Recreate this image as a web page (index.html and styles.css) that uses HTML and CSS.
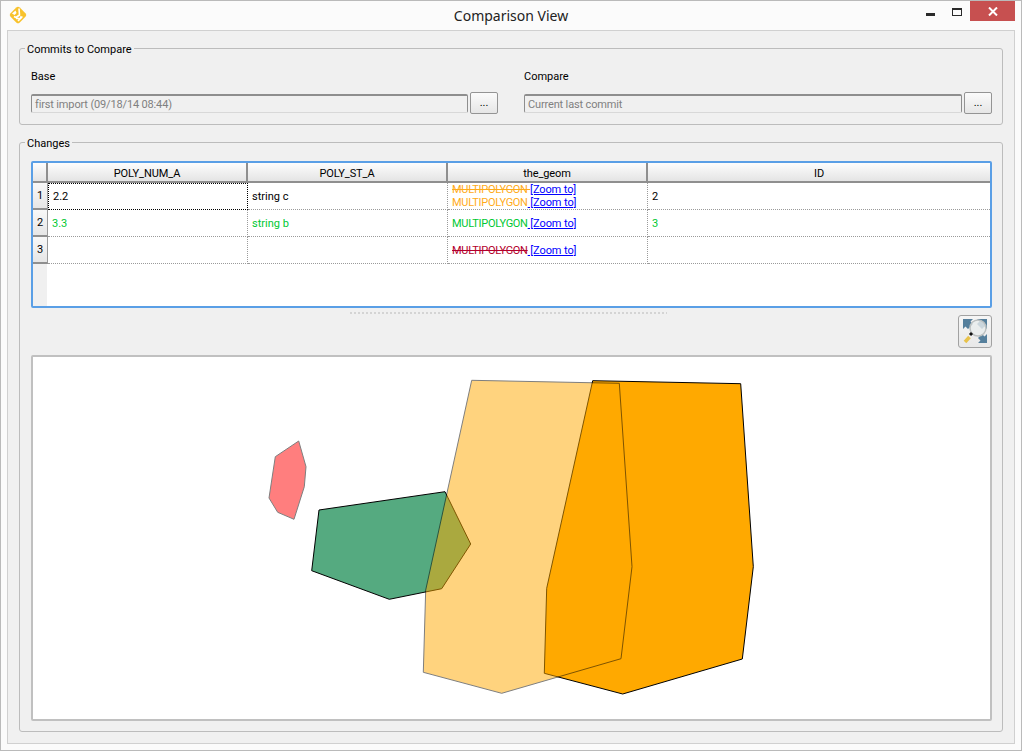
FILE: index.html
```html
<!DOCTYPE html>
<html>

<head>
    <meta charset="UTF-8">
    <title>Comparison View</title>
    <link rel="stylesheet" href="styles.css">
</head>

<body>
    <div class="window">
        <div class="titlebar">
            <svg class="app-icon" width="20" height="20" viewBox="0 0 20 20">
                <rect x="3.5" y="3.5" width="13" height="13" rx="2.5" transform="rotate(45 10 10)" fill="#f8c22c" />
                <path d="M4 8.5 L7.5 5.5 L8.5 8 L6.5 10 Z" fill="#fff" />
                <path d="M11 3.5 L11.5 10 L8 12.5 L6 11.5 M12 12 L14.5 12 M8 13.5 L12.5 13.5 L10 16" fill="none" stroke="#fff" stroke-width="1.6" />
            </svg>
            <div class="title">Comparison View</div>
            <div class="controls">
                <span class="ctl-min"></span>
                <span class="ctl-max"></span>
                <span class="ctl-close">
                    <svg width="10" height="9" viewBox="0 0 10 9">
                        <path d="M1 0.5 L9 8.5 M9 0.5 L1 8.5" stroke="#fff" stroke-width="2" />
                    </svg>
                </span>
            </div>
        </div>

        <div class="panel">
            <fieldset class="group">
                <legend>Commits to Compare</legend>
                <div class="commits">
                    <div>
                        <div class="field-label">Base</div>
                        <div class="field-row">
                            <div class="line-edit">first import (09/18/14 08:44)</div>
                            <button class="dots-btn">...</button>
                        </div>
                    </div>
                    <div>
                        <div class="field-label">Compare</div>
                        <div class="field-row">
                            <div class="line-edit">Current last commit</div>
                            <button class="dots-btn">...</button>
                        </div>
                    </div>
                </div>
            </fieldset>

            <fieldset class="group group-changes">
                <legend>Changes</legend>
                <div class="table-view">
                    <table class="changes">
                        <thead>
                            <tr>
                                <th class="corner"></th>
                                <th class="col">POLY_NUM_A</th>
                                <th class="col">POLY_ST_A</th>
                                <th class="col">the_geom</th>
                                <th class="col-last">ID</th>
                            </tr>
                        </thead>
                        <tbody>
                            <tr>
                                <th class="row-head">1</th>
                                <td class="current">2.2</td>
                                <td>string c</td>
                                <td class="geom">
                                    <s class="modified">MULTIPOLYGON </s><a href="#">[Zoom to]</a><br>
                                    <span class="modified">MULTIPOLYGON</span><a href="#"> [Zoom to]</a>
                                </td>
                                <td>2</td>
                            </tr>
                            <tr class="added">
                                <th class="row-head">2</th>
                                <td>3.3</td>
                                <td>string b</td>
                                <td class="geom">MULTIPOLYGON<a href="#"> [Zoom to]</a></td>
                                <td>3</td>
                            </tr>
                            <tr>
                                <th class="row-head">3</th>
                                <td></td>
                                <td></td>
                                <td class="geom"><s class="removed">MULTIPOLYGON</s><a href="#"> [Zoom to]</a></td>
                                <td></td>
                            </tr>
                        </tbody>
                    </table>
                    <div class="table-rest">
                        <div class="rest-gutter"></div>
                    </div>
                </div>

                <div class="splitter"></div>

                <div class="map-tools">
                    <button class="zoom-btn">
                        <svg width="30" height="29" viewBox="0 0 30 29">
                            <g fill="#557f9c">
                                <path d="M3 2 L13 2 L10.5 4.5 L13 7 L8 12 L5.5 9.5 L3 12 Z" />
                                <path d="M27 2 L17 2 L19.5 4.5 L17 7 L22 12 L24.5 9.5 L27 12 Z" />
                                <path d="M27 26 L18 26 L20.5 23.5 L18 21 L22 17 L24.5 19.5 L27 17 Z" />
                            </g>
                            <circle cx="18" cy="11" r="8" fill="#e8ecec" fill-opacity="0.8" stroke="#bcc0c0" stroke-width="1.5" />
                            <path d="M10 18 L12 16" stroke="#111" stroke-width="3" />
                            <path d="M5 25 L9.5 20" stroke="#e8c24a" stroke-width="3.5" />
                        </svg>
                    </button>
                </div>

                <div class="map">
                    <svg width="957" height="362" viewBox="33 357 957 362">
                        <polygon class="shape-added" points="319,510 445,491.7 470.7,544 441.7,588.7 389.3,599.3 311.7,570.7" />
                        <polygon class="shape-removed" points="298.7,441 306,466.7 304.3,486.7 294,519.3 277.7,512.3 269,498 275.3,456.7" />
                        <polygon class="shape-after" points="592.7,380.7 740.7,383.7 753.3,566.7 742.3,659 622.7,694 544.3,673.3 546.7,588.3" />
                        <polygon class="shape-before" points="471.7,380.3 619.3,383.3 632,566.7 621,658.7 501.7,693.3 423.3,672.3 425.7,590" />
                    </svg>
                </div>
            </fieldset>
        </div>
    </div>
</body>

</html>
```

FILE: styles.css
```css
* {
    box-sizing: border-box;
}

body {
    margin: 0;
    font-family: Roboto, "Liberation Sans", sans-serif;
    font-size: 11px;
    color: #000;
}

.window {
    width: 1022px;
    height: 751px;
    display: flex;
    flex-direction: column;
    padding: 0 6px 6px;
    background-color: #fbfbfb;
    border: 1px solid #bababa;
}

/* title bar */

.titlebar {
    flex: none;
    height: 29px;
    position: relative;
    display: flex;
    align-items: center;
    justify-content: center;
}

.app-icon {
    position: absolute;
    left: 1px;
    top: 4px;
}

.title {
    font-family: "Noto Sans", sans-serif;
    font-size: 14px;
    color: #222;
}

.controls {
    position: absolute;
    right: 0;
    top: 0;
    display: flex;
}

.ctl-min {
    width: 9px;
    height: 3px;
    margin: 12px 17px 0 0;
    background-color: #2a2a2a;
}

.ctl-max {
    width: 10px;
    height: 8px;
    margin: 7px 8px 0 0;
    border: 1px solid #2a2a2a;
    border-top-width: 2px;
}

.ctl-close {
    width: 45px;
    height: 20px;
    display: flex;
    align-items: center;
    justify-content: center;
    background-color: #c75050;
}

/* panel and groups */

.panel {
    flex: 1;
    display: flex;
    flex-direction: column;
    gap: 9px;
    padding: 9px 11px 11px;
    background-color: #f0f0f0;
    border: 1px solid #d0d0d0;
}

.group {
    margin: 0;
    padding: 0 10px 10px 11px;
    min-width: 0;
    border: 1px solid #bcbcbc;
    border-radius: 3px;
}

.group legend {
    margin-left: -6px;
    padding: 3px 2px 0;
    line-height: 13px;
}

.group-changes {
    flex: 1;
}

.commits {
    display: grid;
    grid-template-columns: 467px 1fr;
    gap: 26px;
    padding-top: 13px;
}

.field-label {
    height: 23px;
    line-height: 15px;
}

.field-row {
    display: flex;
    align-items: center;
    gap: 2px;
}

.line-edit {
    flex: 1;
    height: 19px;
    padding-left: 3px;
    line-height: 18px;
    letter-spacing: -0.15px;
    color: #808080;
    background-color: #f0f0f0;
    border: 1px solid #8e8e8e;
    border-top-width: 2px;
    border-bottom-color: #d8d8d8;
    border-radius: 2px;
}

.dots-btn {
    width: 28px;
    height: 22px;
    padding: 0;
    font-family: inherit;
    font-size: 11px;
    line-height: 16px;
    background: linear-gradient(#fbfbfb, #e6e6e6);
    border: 1px solid #949494;
    border-radius: 2px;
}

/* table */

.table-view {
    height: 147px;
    margin-top: 11px;
    display: flex;
    flex-direction: column;
    background-color: #fff;
    border: 2px solid #5a9fe6;
    border-radius: 2px;
}

.changes {
    flex: none;
    table-layout: fixed;
    width: 100%;
    border-collapse: separate;
    border-spacing: 0;
}

.changes thead th {
    height: 20px;
    padding: 2px 0 0;
    font-weight: normal;
    letter-spacing: -0.1px;
    background: linear-gradient(#fdfdfd, #e4e4e4);
    border-bottom: 2px solid #8f8f8f;
    border-right: 2px solid #8f8f8f;
}

.corner {
    width: 15px;
}

.col {
    width: 200px;
}

.changes thead .col-last {
    border-right: 0;
}

.changes .row-head {
    height: 27px;
    padding: 0;
    font-weight: normal;
    background: linear-gradient(#f8f8f8, #e6e6e6);
    border-right: 1px solid #9a9a9a;
    border-bottom: 2px solid #8f8f8f;
}

.changes td {
    height: 27px;
    padding: 0 0 0 4px;
    line-height: 13px;
    border-right: 1px dotted #9a9a9a;
    border-bottom: 1px dotted #9a9a9a;
}

.changes td.geom {
    letter-spacing: -0.3px;
}

.changes td:last-child {
    border-right: 0;
}

.changes td.current {
    border: 1px dotted #000;
}

.added td {
    color: #00c832;
}

.geom a {
    letter-spacing: -0.1px;
    color: #0000ff;
}

.modified {
    color: #ffab1a;
}

.removed {
    color: #b4002c;
}

.table-rest {
    flex: 1;
    display: flex;
}

.rest-gutter {
    width: 14px;
    background-color: #f0f0f0;
}

.splitter {
    width: 317px;
    height: 2px;
    margin: 4px 0 1px 319px;
    background: repeating-linear-gradient(90deg, #d4d4d4 0 2px, transparent 2px 4px);
}

.map-tools {
    display: flex;
    justify-content: flex-end;
}

.zoom-btn {
    width: 34px;
    height: 33px;
    padding: 1px;
    display: flex;
    background: linear-gradient(#f6f6f6, #e8e8e8);
    border: 1px solid #a2a2a2;
    border-radius: 3px;
}

/* map */

.map {
    height: 366px;
    margin-top: 7px;
    background-color: #fff;
    border: 2px solid #c0c0c0;
    border-radius: 2px;
}

.map svg {
    display: block;
}

.map polygon {
    stroke: #000;
    stroke-width: 1;
}

.shape-added {
    fill: #55aa80;
}

.shape-removed {
    fill: #ff0000;
    opacity: 0.5;
}

.shape-after {
    fill: #ffa900;
}

.shape-before {
    fill: #ffa900;
    opacity: 0.5;
}
```
